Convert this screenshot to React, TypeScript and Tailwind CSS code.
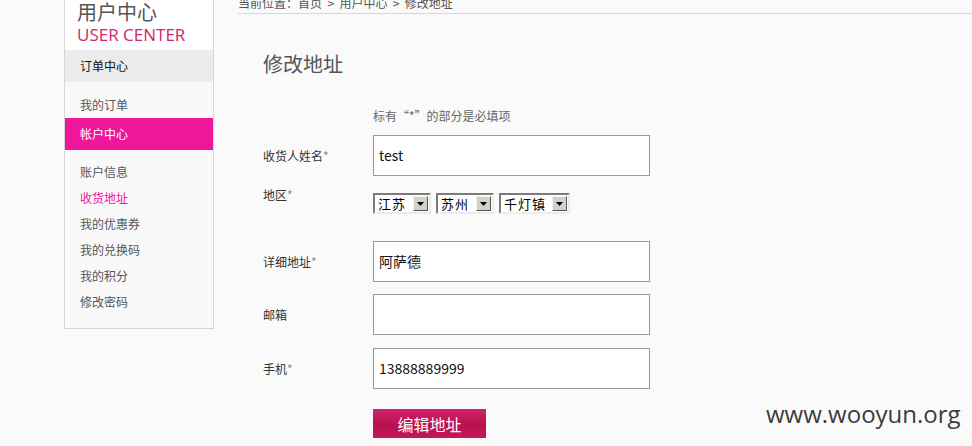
const cjk = { fontFamily: '"Microsoft YaHei", "Noto Sans CJK SC", "Noto Sans", sans-serif' };

const menu = ["账户信息", "收货地址", "我的优惠券", "我的兑换码", "我的积分", "修改密码"];

function Select({ label, width }: { label: string; width: string }) {
  return (
    <div
      className={`${width} h-[21px] flex items-center justify-between bg-white border-2 border-t-[#7b7b7b] border-l-[#7b7b7b] border-b-[#ececec] border-r-[#ececec] pl-[3px] pr-[1px]`}
    >
      <span className="text-[13px] leading-[15px] text-black tracking-[1px]">{label}</span>
      <span className="w-[15px] h-[15px] flex items-center justify-center bg-[#d4d0c8] border border-t-[#f4f4f4] border-l-[#f4f4f4] border-b-[#555] border-r-[#555]">
        <svg width="7" height="4" viewBox="0 0 7 4">
          <path d="M0 0h7L3.5 4z" fill="#000" />
        </svg>
      </span>
    </div>
  );
}

function Label({ text, star }: { text: string; star?: boolean }) {
  return (
    <span>
      {text}
      {star && <span className="text-[#888]">*</span>}
    </span>
  );
}

function Field({ label, star, value }: { label: string; star?: boolean; value?: string }) {
  return (
    <div className="flex items-center">
      <div className="w-[110px] text-[12px] text-[#333]">
        <Label text={label} star={star} />
      </div>
      <div className="w-[277px] h-[41px] border border-[#999] bg-white flex items-center pl-[5px] text-[14px] text-[#111]">
        {value}
      </div>
    </div>
  );
}

export default function App() {
  return (
    <div className="relative w-[972px] h-[446px] overflow-hidden bg-[#fafafa]" style={cjk}>
      <div className="flex items-start">
        {/* sidebar */}
        <div className="ml-[64px] w-[150px] border-x border-b border-[#d6d6d6] bg-[#f9f9f9]">
          <div className="bg-white pl-[12px] pb-[4px]">
            <div className="text-[20px] leading-[24px] text-[#555]">用户中心</div>
            <div
              className="text-[17px] leading-[22px] text-[#d4246c]"
              style={{ fontFamily: '"Open Sans", "Noto Sans", sans-serif' }}
            >
              USER CENTER
            </div>
          </div>
          <div className="h-[32px] bg-[#ebebeb] pl-[15px] flex items-center text-[12px] text-[#111]">订单中心</div>
          <div className="pt-[10px]">
            <div className="h-[26px] pl-[15px] flex items-center text-[12px] text-[#555]">我的订单</div>
          </div>
          <div className="h-[32px] bg-[#f0169b] pl-[15px] flex items-center text-[12px] text-white">帐户中心</div>
          <div className="pt-[9px] pb-[13px]">
            {menu.map((m) => (
              <div
                key={m}
                className={`h-[26px] pl-[15px] flex items-center text-[12px] ${
                  m === "收货地址" ? "text-[#f0169b]" : "text-[#555]"
                }`}
              >
                {m}
              </div>
            ))}
          </div>
        </div>

        {/* main */}
        <div className="ml-[24px] flex-1">
          <div className="h-[19px] border-b border-[#d8d8d8]">
            <div className="-mt-[5px] text-[12px] leading-[16px] text-[#555]">
              当前位置：首页&nbsp;&nbsp;&gt;&nbsp;&nbsp;用户中心&nbsp;&nbsp;&gt;&nbsp;&nbsp;修改地址
            </div>
          </div>
          <div className="pl-[25px]">
            <h1 className="mt-[36px] text-[20px] leading-[28px] text-[#555]">修改地址</h1>
            <div className="mt-[28px] pl-[110px] text-[12px] leading-[20px] text-[#666]">标有“*”的部分是必填项</div>
            <div className="mt-[9px]">
              <Field label="收货人姓名" star value="test" />
            </div>
            <div className="mt-[11px] flex">
              <div className="w-[110px] text-[12px] leading-[16px] text-[#333]">
                <Label text="地区" star />
              </div>
              <div className="mt-[6px] flex gap-[5px]">
                <Select label="江苏" width="w-[58px]" />
                <Select label="苏州" width="w-[58px]" />
                <Select label="千灯镇" width="w-[71px]" />
              </div>
            </div>
            <div className="mt-[27px]">
              <Field label="详细地址" star value="阿萨德" />
            </div>
            <div className="mt-[12px]">
              <Field label="邮箱" />
            </div>
            <div className="mt-[13px]">
              <Field label="手机" star value="13888889999" />
            </div>
            <div className="mt-[20px] pl-[110px]">
              <button className="w-[113px] h-[29px] bg-[linear-gradient(#d2226a,#b8124f_55%,#c4185c)] text-white text-[16px]">
                编辑地址
              </button>
            </div>
          </div>
        </div>
      </div>

      <div
        className="absolute left-[766px] top-[398px] text-[24px] leading-[32px] text-[#3c3c3c]"
        style={{ fontFamily: '"Open Sans", "Noto Sans", sans-serif' }}
      >
        www.wooyun.org
      </div>
    </div>
  );
}
